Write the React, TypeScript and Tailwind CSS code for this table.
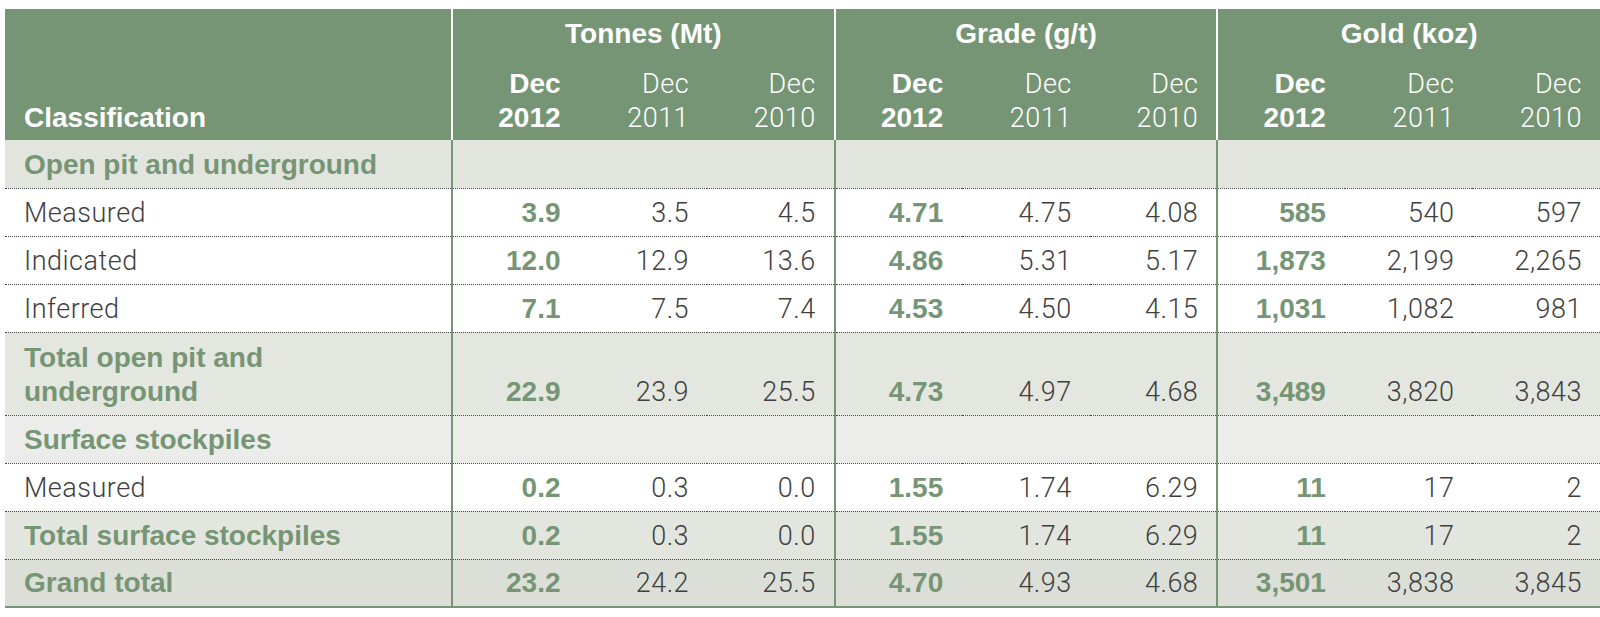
import React from 'react';

type Row = {
  kind: 'section' | 'data' | 'total' | 'grand';
  label: React.ReactNode;
  vals?: string[];
  bg: string;
  tall?: boolean;
};

const rows: Row[] = [
  { kind: 'section', label: 'Open pit and underground', bg: 'bg-[#e2e5de]' },
  { kind: 'data', label: 'Measured', bg: 'bg-white', vals: ['3.9', '3.5', '4.5', '4.71', '4.75', '4.08', '585', '540', '597'] },
  { kind: 'data', label: 'Indicated', bg: 'bg-white', vals: ['12.0', '12.9', '13.6', '4.86', '5.31', '5.17', '1,873', '2,199', '2,265'] },
  { kind: 'data', label: 'Inferred', bg: 'bg-white', vals: ['7.1', '7.5', '7.4', '4.53', '4.50', '4.15', '1,031', '1,082', '981'] },
  {
    kind: 'total',
    label: (
      <>
        Total open pit and
        <br />
        underground
      </>
    ),
    bg: 'bg-[#e4e6e0]',
    tall: true,
    vals: ['22.9', '23.9', '25.5', '4.73', '4.97', '4.68', '3,489', '3,820', '3,843'],
  },
  { kind: 'section', label: 'Surface stockpiles', bg: 'bg-[#ecedea]' },
  { kind: 'data', label: 'Measured', bg: 'bg-white', vals: ['0.2', '0.3', '0.0', '1.55', '1.74', '6.29', '11', '17', '2'] },
  { kind: 'total', label: 'Total surface stockpiles', bg: 'bg-[#e3e6df]', vals: ['0.2', '0.3', '0.0', '1.55', '1.74', '6.29', '11', '17', '2'] },
  { kind: 'grand', label: 'Grand total', bg: 'bg-[#dbdfd7]', vals: ['23.2', '24.2', '25.5', '4.70', '4.93', '4.68', '3,501', '3,838', '3,845'] },
];

const groups = ['Tonnes (Mt)', 'Grade (g/t)', 'Gold (koz)'];

const bold = "font-['Liberation_Sans',Arial,sans-serif] font-bold text-[28px]";
const light = "font-['Roboto',sans-serif] font-light text-[27px] tracking-[0.5px]";

export default function App() {
  return (
    <div className="bg-white w-[1600px] h-[617px] pt-[9px] pl-[5px] overflow-hidden">
      <table className="table-fixed w-[1595px] border-collapse leading-[34px]">
        <colgroup>
          <col className="w-[447px]" />
          {Array.from({ length: 9 }).map((_, i) => (
            <col key={i} className="w-[127.55px]" />
          ))}
        </colgroup>
        <thead className="bg-[#769575] text-white">
          <tr>
            <th rowSpan={2} className={`${bold} text-left align-bottom pl-[19px] pb-[5px]`}>
              Classification
            </th>
            {groups.map((g) => (
              <th
                key={g}
                colSpan={3}
                className={`${bold} h-[51px] text-center align-bottom pb-[9px] border-l-2 border-white`}
              >
                {g}
              </th>
            ))}
          </tr>
          <tr>
            {groups.map((g) =>
              ['2012', '2011', '2010'].map((y, i) => (
                <th
                  key={g + y}
                  className={`${i === 0 ? bold + ' border-l-2 border-white pr-[19px]' : light + ' pr-[18px]'} h-[80px] text-right align-bottom pb-[5px]`}
                >
                  Dec
                  <br />
                  {y}
                </th>
              ))
            )}
          </tr>
        </thead>
        <tbody>
          {rows.map((r, ri) => (
            <tr
              key={ri}
              className={`${r.bg} ${r.kind === 'grand' ? 'border-b-2 border-solid border-[#769575]' : 'border-b border-dotted border-[#4a4a4a]'}`}
            >
              <td
                className={`${r.kind === 'data' ? light + ' text-[#3f3f3f]' : bold + ' text-[#769575]'} ${r.tall ? 'h-[83px]' : 'h-[48px]'} align-bottom pl-[19px] pb-[6px]`}
              >
                {r.label}
              </td>
              {Array.from({ length: 9 }).map((_, ci) => {
                const v = r.vals ? r.vals[ci] : '';
                const first = ci % 3 === 0;
                return (
                  <td
                    key={ci}
                    className={`${first ? bold + ' text-[#769575] border-l-2 border-solid border-[#769575] pr-[19px]' : light + ' text-[#3f3f3f] pr-[18px]'} text-right align-bottom pb-[6px]`}
                  >
                    {v}
                  </td>
                );
              })}
            </tr>
          ))}
        </tbody>
      </table>
    </div>
  );
}
